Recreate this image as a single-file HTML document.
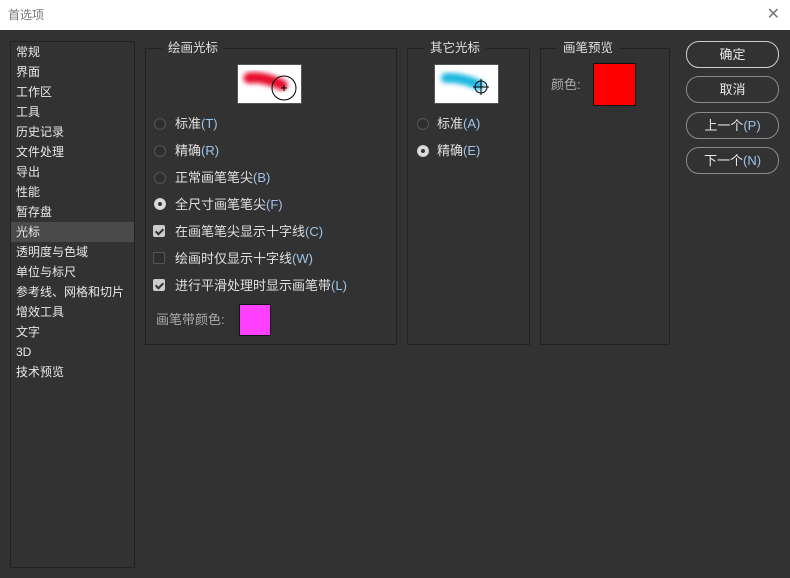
<!DOCTYPE html>
<html><head><meta charset="utf-8"><style>
*{margin:0;padding:0;box-sizing:border-box}
body{width:790px;height:578px;background:#323232;font-family:"Liberation Sans","Noto Sans CJK SC",sans-serif;font-size:12px;color:#e0e0e0;position:relative;overflow:hidden}
.title{position:absolute;left:0;top:0;width:790px;height:30px;background:#fff;color:#777;font-size:12px;line-height:30px;padding-left:8px}
.close{position:absolute;right:10px;top:0;color:#777;font-size:16px;line-height:30px}
.list{position:absolute;left:10px;top:41px;width:125px;height:527px;border:1px solid #222;background:#323232}
.list div{height:20px;line-height:20px;padding-left:5px;font-size:12px;color:#e8e8e8}
.list .sel{background:#4a4a4a}
.grp{position:absolute;border:1px solid #222;top:48px;height:297px}
.grp .lg{position:absolute;top:-9px;background:#323232;padding:0 6px;font-size:12.5px;color:#e0e0e0;line-height:16px}
.prev{position:absolute;background:#fff;border:1px solid #555}
.row{position:absolute;height:18px;line-height:18px;font-size:13px;color:#e0e0e0}
.a{color:#9fc3e8}
.rad{position:absolute;width:12px;height:12px;border-radius:50%;border:1px solid #555;background:#2e2e2e}
.rad.on{background:#ddd;border:1px solid #ccc}
.rad.on:after{content:"";position:absolute;left:3px;top:3px;width:4px;height:4px;border-radius:50%;background:#333}
.chk{position:absolute;width:12px;height:12px;border:1px solid #555;background:#2e2e2e;border-radius:2px}
.chk.on{background:#ccc;border-color:#ccc}
.chk.on:after{content:"";position:absolute;left:3px;top:1px;width:3px;height:6px;border:solid #333;border-width:0 2px 2px 0;transform:rotate(45deg)}
.btn{position:absolute;left:686px;width:93px;height:27px;border:1px solid #8a8a8a;border-radius:13px;text-align:center;line-height:25px;color:#e8e8e8;font-size:13px}
.btn.def{border-color:#cfcfcf}
</style></head><body>
<div class="title">首选项<span class="close">✕</span></div>
<div class="list">
<div style="margin-top:0">常规</div><div>界面</div><div>工作区</div><div>工具</div><div>历史记录</div><div>文件处理</div><div>导出</div><div>性能</div><div>暂存盘</div><div class="sel">光标</div><div>透明度与色域</div><div>单位与标尺</div><div>参考线、网格和切片</div><div>增效工具</div><div>文字</div><div>3D</div><div>技术预览</div>
</div>

<div class="grp" style="left:145px;width:252px">
<span class="lg" style="left:16px">绘画光标</span>
</div>
<div class="prev" style="left:237px;top:64px;width:65px;height:40px">
<svg width="63" height="38"><defs><filter id="b" x="-50%" y="-100%" width="200%" height="300%"><feGaussianBlur stdDeviation="2.5"/></filter></defs>
<path d="M11 13 Q25 11 44 20" stroke="#e8102e" stroke-width="11" fill="none" stroke-linecap="round" filter="url(#b)"/>
<circle cx="46" cy="23" r="12" fill="none" stroke="#000" stroke-width="1"/>
<path d="M43 23h6M46 20v6" stroke="#000"/></svg></div>
<div class="rad" style="left:154px;top:118px"></div><div class="row" style="left:175px;top:115px">标准<span class="a">(T)</span></div>
<div class="rad" style="left:154px;top:145px"></div><div class="row" style="left:175px;top:142px">精确<span class="a">(R)</span></div>
<div class="rad" style="left:154px;top:172px"></div><div class="row" style="left:175px;top:169px">正常画笔笔尖<span class="a">(B)</span></div>
<div class="rad on" style="left:154px;top:198px"></div><div class="row" style="left:175px;top:196px">全尺寸画笔笔尖<span class="a">(F)</span></div>
<div class="chk on" style="left:153px;top:225px"></div><div class="row" style="left:175px;top:223px">在画笔笔尖显示十字线<span class="a">(C)</span></div>
<div class="chk" style="left:153px;top:252px"></div><div class="row" style="left:175px;top:250px">绘画时仅显示十字线<span class="a">(W)</span></div>
<div class="chk on" style="left:153px;top:279px"></div><div class="row" style="left:175px;top:277px">进行平滑处理时显示画笔带<span class="a">(L)</span></div>
<div class="row" style="left:156px;top:311px;color:#aaa">画笔带颜色:</div>
<div style="position:absolute;left:239px;top:304px;width:32px;height:32px;background:#ff40ff;border:1px solid #111"></div>

<div class="grp" style="left:407px;width:123px">
<span class="lg" style="left:16px">其它光标</span>
</div>
<div class="prev" style="left:434px;top:64px;width:65px;height:40px">
<svg width="63" height="38"><defs><filter id="c" x="-50%" y="-100%" width="200%" height="300%"><feGaussianBlur stdDeviation="2.5"/></filter></defs>
<path d="M11 13 Q25 12 44 20" stroke="#1ab8e0" stroke-width="10" fill="none" stroke-linecap="round" filter="url(#c)"/>
<circle cx="46" cy="22" r="6" fill="none" stroke="#000"/>
<path d="M38 22h16M46 14v16" stroke="#000"/></svg></div>
<div class="rad" style="left:417px;top:118px"></div><div class="row" style="left:437px;top:115px">标准<span class="a">(A)</span></div>
<div class="rad on" style="left:417px;top:145px"></div><div class="row" style="left:437px;top:142px">精确<span class="a">(E)</span></div>

<div class="grp" style="left:540px;width:130px">
<span class="lg" style="left:16px">画笔预览</span>
</div>
<div class="row" style="left:551px;top:76px;color:#aaa">颜色:</div>
<div style="position:absolute;left:593px;top:63px;width:43px;height:43px;background:#f00;border:1px solid #111"></div>

<div class="btn def" style="top:41px">确定</div>
<div class="btn" style="top:76px">取消</div>
<div class="btn" style="top:112px">上一个<span class="a">(P)</span></div>
<div class="btn" style="top:147px">下一个<span class="a">(N)</span></div>
</body></html>
